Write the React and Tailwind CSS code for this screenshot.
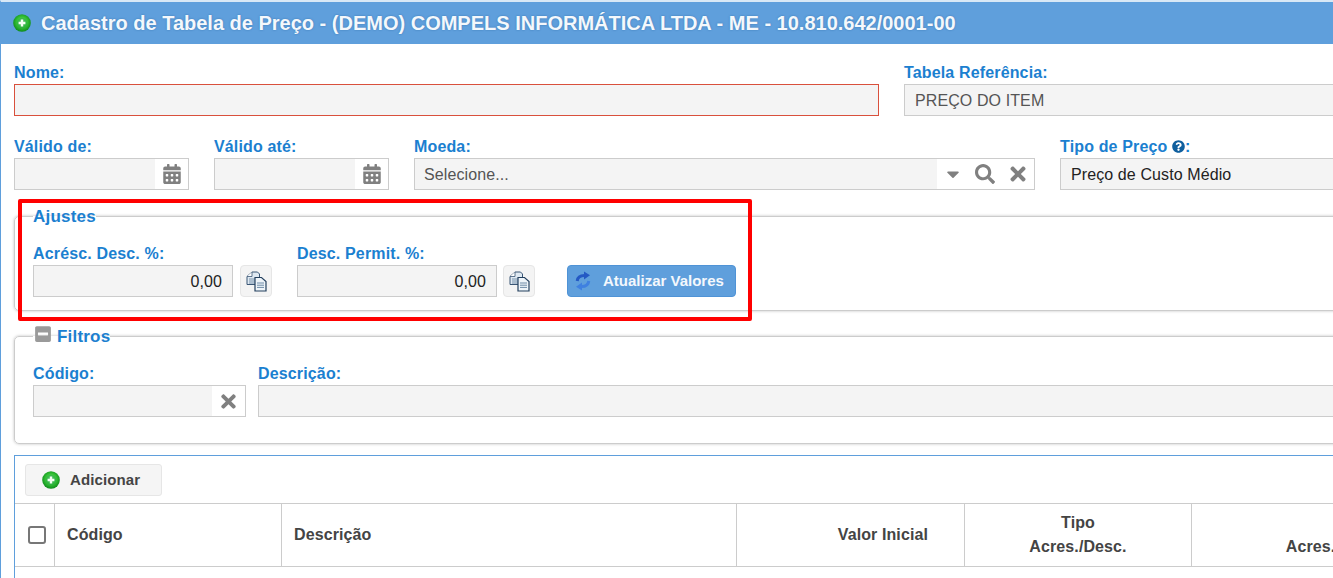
import React from "react";
import { FaCalendarAlt, FaCaretDown, FaMinusSquare, FaQuestionCircle, FaSearch, FaTimes } from "react-icons/fa";

function GreenPlus({ id }) {
  return (
    <svg width="18" height="18" viewBox="0 0 18 18" className="shrink-0">
      <defs>
        <radialGradient id={id} cx="50%" cy="45%" r="55%">
          <stop offset="0%" stopColor="#8be88b" />
          <stop offset="55%" stopColor="#35c335" />
          <stop offset="100%" stopColor="#0d8a1c" />
        </radialGradient>
      </defs>
      <circle cx="9" cy="9" r="8.8" fill={`url(#${id})`} />
      <circle cx="9" cy="9" r="5.2" fill="#2aa84a" opacity="0.55" />
      <path d="M7.8 5.6h2.4v2.2h2.2v2.4h-2.2v2.2H7.8v-2.2H5.6V7.8h2.2z" fill="#f4fff4" />
    </svg>
  );
}

function CopyIcon() {
  return (
    <svg width="21" height="21" viewBox="0 0 21 21">
      <path d="M6 1h5.5l2 2v10.500H1V5.500z" fill="#dfe9f2" stroke="#3a5675" strokeWidth="1" />
      <path d="M6 1v4.500H1" fill="#ffffff" stroke="#3a5675" strokeWidth="0.8" />
      <path d="M3 8h6M3 10h6M3 12h6" stroke="#6d88a3" strokeWidth="0.9" />
      <path d="M9 6.500h6.500l4.500 4v9.500H9z" fill="#eef4f9" stroke="#24405e" strokeWidth="1.2" />
      <path d="M11 12h7M11 14.200h7M11 16.400h7" stroke="#6d8aa6" strokeWidth="1" />
    </svg>
  );
}

function RefreshIcon() {
  return (
    <svg width="16" height="20" viewBox="0 0 16 20" className="shrink-0">
      <path d="M2.200 10C2.600 6.400 5.500 4.500 9.500 4.500" fill="none" stroke="#2459c4" strokeWidth="3" />
      <path d="M9 .5 15 4.200 9 8.600z" fill="#2459c4" />
      <path d="M13.800 10C13.400 13.600 10.500 15.500 6.500 15.500" fill="none" stroke="#3f80e0" strokeWidth="3" />
      <path d="M7 11.400 1 15.800 7 19.500z" fill="#3f80e0" />
    </svg>
  );
}

function Label({ children }) {
  return (
    <label className="mb-[2px] block h-5 text-base leading-[22px] font-bold tracking-[0.15px] whitespace-nowrap text-[#1b80d0]">
      {children}
    </label>
  );
}

function Box({ children, className = "" }) {
  return (
    <div className={`flex h-8 items-center border border-[#cccccc] bg-[#f4f4f4] text-base leading-[26px] tracking-[0.1px] ${className}`}>
      {children}
    </div>
  );
}

function DateField({ label, className }) {
  return (
    <div className={`w-[175px] ${className}`}>
      <Label>{label}</Label>
      <Box>
        <div className="flex-1" />
        <div className="flex h-full w-[33px] items-center justify-center bg-white text-[20px] text-[#808080]">
          <FaCalendarAlt />
        </div>
      </Box>
    </div>
  );
}

function CopyButton() {
  return (
    <button type="button" className="flex h-8 w-8 items-center justify-center rounded-[4px] border border-[#e6e6e6] bg-[#f4f4f4]">
      <CopyIcon />
    </button>
  );
}

function Legend({ children }) {
  return (
    <legend className="flex h-5 items-center pt-[2px] text-[17px] leading-5 font-bold tracking-[0.2px] text-[#1b80d0]">
      {children}
    </legend>
  );
}

export default function App() {
  return (
    <div className="h-[578px] w-[1333px] overflow-hidden bg-white font-['Liberation_Sans',Arial,sans-serif]">
      <div className="relative h-full w-[1460px] border-t-2 border-l border-t-[#d8e8f6] border-l-[#5f9fdc]">
        <div className="flex h-[42px] items-center gap-[10px] bg-[#5f9fdc] pl-3">
          <GreenPlus id="titleGreen" />
          <h1 className="text-[20px] font-bold whitespace-nowrap text-[#f4f8fc] [text-shadow:0_0_2px_rgba(30,90,150,0.6)]">
            Cadastro de Tabela de Preço - (DEMO) COMPELS INFORMÁTICA LTDA - ME - 10.810.642/0001-00
          </h1>
        </div>

        <div className="pt-[18px] pl-[13px]">
          <div className="flex">
            <div className="w-[865px]">
              <Label>Nome:</Label>
              <div className="h-8 border border-[#d9503c] bg-[#f4f4f4]" />
            </div>
            <div className="ml-[25px] w-[500px]">
              <Label>Tabela Referência:</Label>
              <Box className="pt-[2px] pl-[10px] text-[#555555]">PREÇO DO ITEM</Box>
            </div>
          </div>

          <div className="mt-5 flex">
            <DateField label="Válido de:" />
            <DateField label="Válido até:" className="ml-[25px]" />
            <div className="ml-[25px] w-[621px]">
              <Label>Moeda:</Label>
              <Box>
                <span className="flex-1 pt-[2px] pl-[9px] text-[#555555]">Selecione...</span>
                <div className="flex h-full w-[97px] items-center bg-white text-[#808080]">
                  <FaCaretDown className="ml-[6px] text-[20px]" />
                  <FaSearch className="ml-[12px] text-[20px]" />
                  <FaTimes className="ml-[12px] text-[22px]" />
                </div>
              </Box>
            </div>
            <div className="ml-[25px] w-[400px]">
              <Label>
                Tipo de Preço <FaQuestionCircle className="inline align-[-1px] text-[13px] text-[#0f5f9e]" />:
              </Label>
              <Box className="pt-[2px] pl-[10px] text-[#222222]">Preço de Custo Médio</Box>
            </div>
          </div>

          <fieldset className="mt-4 rounded-[5px] border border-[#cccccc] px-[18px] pt-[17px] pb-[13px] shadow-[0_0_3px_rgba(0,0,0,0.25)]">
            <Legend>Ajustes</Legend>
            <div className="flex items-end">
              <div className="w-[200px]">
                <Label>Acrésc. Desc. %:</Label>
                <Box className="justify-end pt-[2px] pr-[10px] text-[#222222]">0,00</Box>
              </div>
              <div className="ml-[7px]"><CopyButton /></div>
              <div className="ml-[25px] w-[200px]">
                <Label>Desc. Permit. %:</Label>
                <Box className="justify-end pt-[2px] pr-[10px] text-[#222222]">0,00</Box>
              </div>
              <div className="ml-[6px]"><CopyButton /></div>
              <button type="button" className="ml-8 flex h-8 w-[169px] items-center rounded-[4px] border border-[#4f93d6] bg-[#5f9fdc] pl-[7px] text-[15px] font-bold text-[#f4f8fc]">
                <RefreshIcon />
                <span className="ml-[12px]">Atualizar Valores</span>
              </button>
            </div>
          </fieldset>

          <fieldset className="mt-[15px] rounded-[5px] border border-[#cccccc] px-[18px] pt-[17px] pb-[26px] shadow-[0_0_3px_rgba(0,0,0,0.25)]">
            <Legend>
              <FaMinusSquare className="mr-[5px] mb-[6px] ml-[1px] text-[18px] text-[#9a9a9a]" />
              Filtros
            </Legend>
            <div className="flex">
              <div className="w-[213px]">
                <Label>Código:</Label>
                <Box>
                  <div className="flex-1" />
                  <div className="flex h-full w-[33px] items-center justify-center bg-white text-[21px] text-[#808080]">
                    <FaTimes />
                  </div>
                </Box>
              </div>
              <div className="ml-3 flex-1">
                <Label>Descrição:</Label>
                <Box />
              </div>
            </div>
          </fieldset>

          <div className="mt-[11px] h-[200px] border border-[#5f9fdc]">
            <div className="pt-2 pb-[7px] pl-[10px]">
              <button type="button" className="flex h-8 w-[137px] items-center rounded-[3px] border border-[#e6e6e6] bg-[#f5f5f5] pl-4 text-[15px] font-bold tracking-[0.1px] text-[#444444]">
                <GreenPlus id="addGreen" />
                <span className="ml-[10px]">Adicionar</span>
              </button>
            </div>
            <div className="grid h-[64px] grid-cols-[40px_227px_455px_228px_227px_229px] border-y border-[#cccccc] text-base leading-6 font-bold tracking-[0.1px] text-[#444444]">
              <div className="flex items-center justify-center border-r border-[#cccccc] pl-1">
                <div className="h-[18px] w-[18px] rounded-[3px] border-2 border-[#777777] bg-white" />
              </div>
              <div className="flex items-center border-r border-[#cccccc] pl-3">Código</div>
              <div className="flex items-center border-r border-[#cccccc] pl-3">Descrição</div>
              <div className="flex items-center justify-end border-r border-[#cccccc] pr-9">Valor Inicial</div>
              <div className="flex items-center justify-center border-r border-[#cccccc] text-center">
                <span>Tipo<br />Acres./Desc.</span>
              </div>
              <div className="flex items-center justify-end pr-[38px] text-right">
                <span>Valor<br />Acres./Desc.</span>
              </div>
            </div>
          </div>
        </div>

        <div className="absolute top-[197px] left-[17px] h-[122px] w-[734px] rounded-[2px] border-4 border-[#ff0000]" />
      </div>
    </div>
  );
}
